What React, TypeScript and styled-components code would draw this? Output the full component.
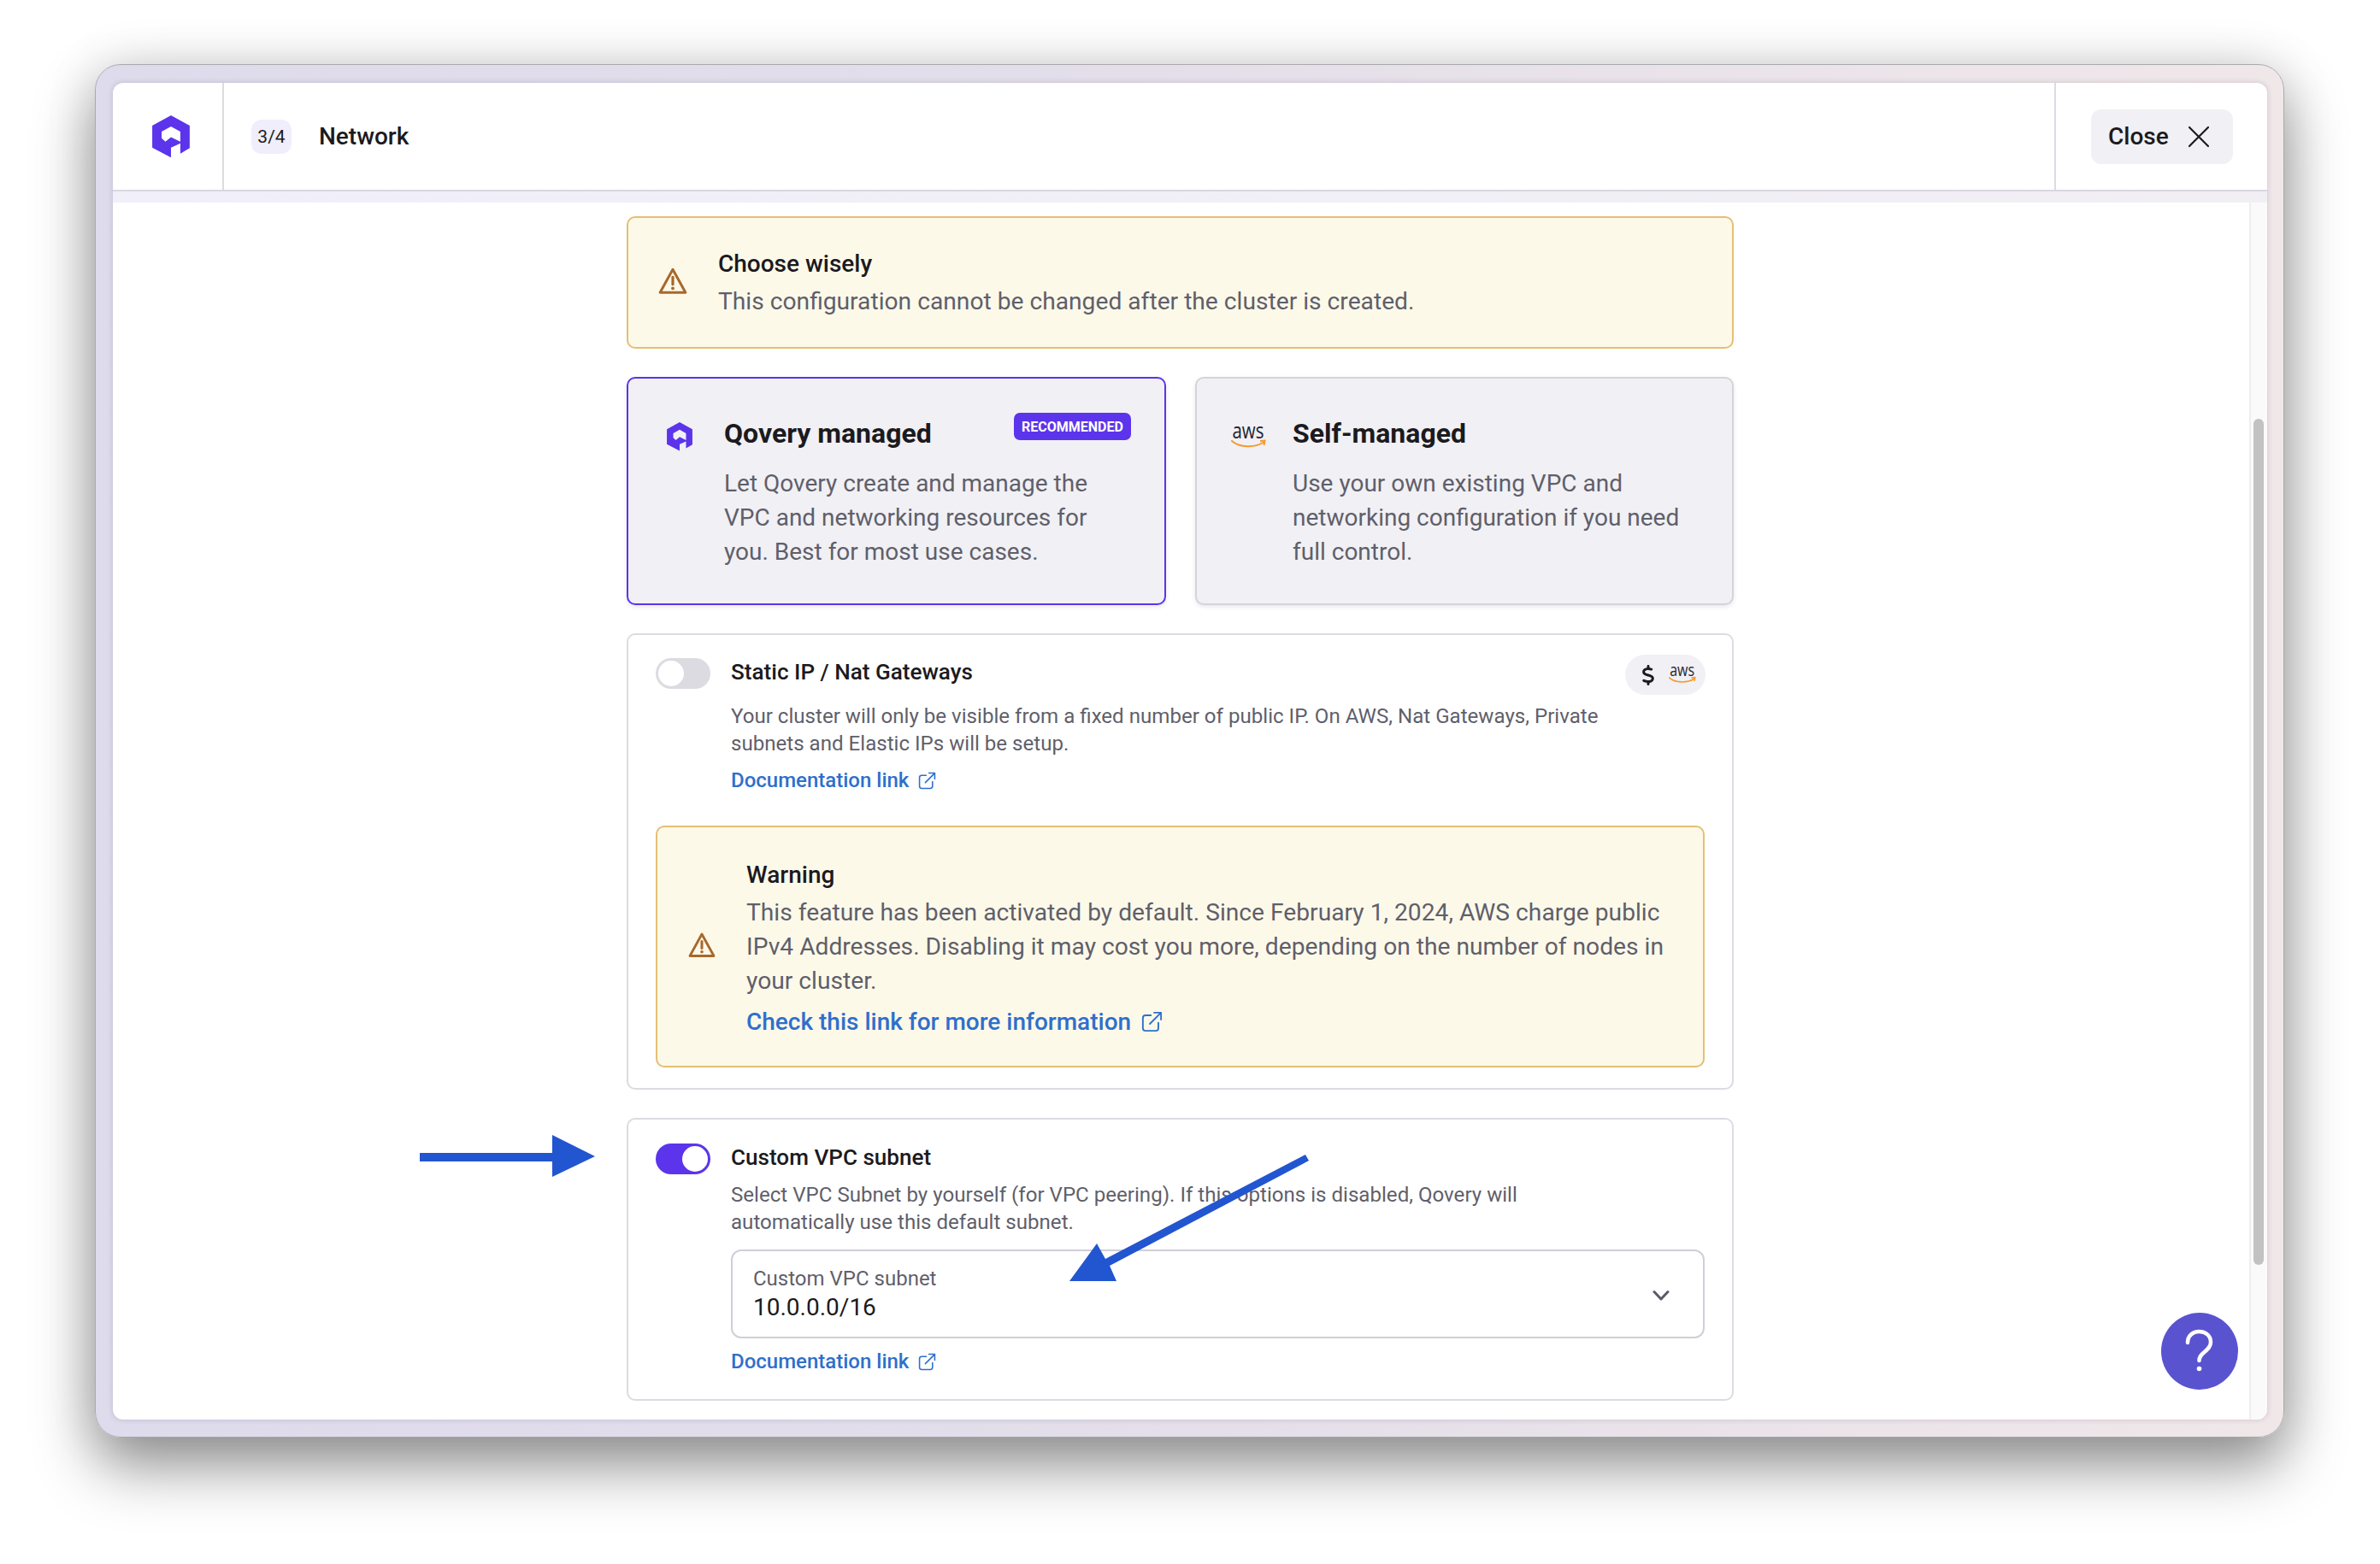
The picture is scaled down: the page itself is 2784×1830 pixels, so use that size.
import React from "react";
import styled, { createGlobalStyle } from "styled-components";
import { FaDollarSign } from "react-icons/fa6";

const GlobalStyle = createGlobalStyle`
  html, body {
    margin: 0;
    background: #fff;
    font-family: Roboto, "Liberation Sans", sans-serif;
    color: #1b1a20;
  }
  * {
    box-sizing: border-box;
  }
`;

const LogoMark = ({ size }: { size: number }) => (
  <svg width={size} height={size * 1.12} viewBox="0 0 44 49.5">
    <path
      fill="#5b34ec"
      fillRule="evenodd"
      d="M22 0 L44 12 V38.5 L33 45 V33 L22 38 V49.5 L0 38 V12 Z M22 13 L33 19 V31 L22 25.5 L15.5 31 L11 27 V19 Z"
    />
  </svg>
);

const AwsLogo = ({ width }: { width: number }) => (
  <svg width={width} height={width * 0.66} viewBox="0 0 41 27">
    <text
      x="20"
      y="15"
      textAnchor="middle"
      textLength="37"
      lengthAdjust="spacingAndGlyphs"
      fontFamily="Open Sans, sans-serif"
      fontSize="25"
      fill="#232330"
    >
      aws
    </text>
    <path d="M1 18 C10 26 28 26 38 19.5" fill="none" stroke="#f59a2c" strokeWidth="2" strokeLinecap="round" />
    <path d="M34 18 L39.5 17.5 L38.5 23" fill="none" stroke="#f59a2c" strokeWidth="2" />
  </svg>
);

const WarnIcon = ({ size }: { size: number }) => (
  <svg width={size} height={size} viewBox="0 0 32 32" fill="none">
    <path d="M16 3 L30 28.5 H2 Z" stroke="#a8682a" strokeWidth="2.8" strokeLinejoin="round" />
    <path d="M16 11.5 V19.5" stroke="#a8682a" strokeWidth="3" strokeLinecap="round" />
    <circle cx="16" cy="23.8" r="1.8" fill="#a8682a" />
  </svg>
);

const ExternalIcon = ({ size }: { size: number }) => (
  <svg width={size} height={size} viewBox="0 0 20 20" fill="none" stroke="#2f6fcc" strokeWidth="1.5" strokeLinecap="round" strokeLinejoin="round">
    <path d="M9 4 H4 A2.5 2.5 0 0 0 1.5 6.5 V16 A2.5 2.5 0 0 0 4 18.5 H13.5 A2.5 2.5 0 0 0 16 16 V11" />
    <path d="M8 12 L18.5 1.5 M12 1.5 H18.5 V8" />
  </svg>
);

const Page = styled.div`
  width: 2784px;
  height: 1830px;
  padding: 75px 112px 148px 111px;
  background: #fff;
  position: relative;
`;

const Frame = styled.div`
  height: 100%;
  padding: 21px 19px 20px 20px;
  border-radius: 30px;
  border: 1px solid #a9a9ad;
  background: linear-gradient(90deg, #dedbec 0%, #e3deea 45%, #f0e7e9 100%);
  box-shadow: 0 34px 70px rgba(0, 0, 0, 0.42), 0 0 60px rgba(0, 0, 0, 0.12);
`;

const Panel = styled.div`
  position: relative;
  height: 100%;
  display: flex;
  flex-direction: column;
  background: #fff;
  border-radius: 12px;
  overflow: hidden;
  box-shadow: 0 0 6px rgba(60, 50, 80, 0.2);
`;

const Header = styled.header`
  flex: none;
  height: 127px;
  display: flex;
  align-items: stretch;
  border-bottom: 2px solid #d9d7e2;
`;

const LogoCell = styled.div`
  width: 130px;
  padding-left: 46px;
  display: flex;
  align-items: center;
  border-right: 2px solid #dcdbe2;
`;

const TitleCell = styled.div`
  flex: 1;
  padding-left: 32px;
  display: flex;
  align-items: center;
  gap: 32px;
`;

const StepBadge = styled.span`
  width: 47px;
  height: 40px;
  border-radius: 12px;
  background: #f0eefb;
  display: flex;
  align-items: center;
  justify-content: center;
  font-size: 21px;
  color: #1b1a20;
`;

const HeaderTitle = styled.h1`
  margin: 0;
  font-size: 28px;
  font-weight: 500;
`;

const CloseCell = styled.div`
  width: 249px;
  padding-left: 41px;
  display: flex;
  align-items: center;
  border-left: 2px solid #dcdbe2;
`;

const CloseButton = styled.button`
  width: 166px;
  height: 64px;
  padding: 0 27px 0 20px;
  border: 0;
  border-radius: 12px;
  background: #f1f0f4;
  display: flex;
  align-items: center;
  justify-content: space-between;
  font-family: inherit;
  font-size: 28px;
  font-weight: 500;
  color: #1b1a20;
`;

const Stripe = styled.div`
  flex: none;
  height: 13px;
  background: linear-gradient(90deg, #f0effa, #f1eff4);
`;

const Body = styled.div`
  flex: 1;
  min-height: 0;
  display: flex;
`;

const Scroller = styled.main`
  flex: 1;
  padding: 16px 2px 0 0;
  display: flex;
  flex-direction: column;
  align-items: center;
`;

const Column = styled.div`
  width: 1295px;
  display: flex;
  flex-direction: column;
  gap: 33px;
`;

const Track = styled.div`
  flex: none;
  width: 21px;
  padding: 253px 0 0 3px;
  background: #fafafa;
  border-left: 2px solid #eeeeee;
`;

const Thumb = styled.div`
  width: 12px;
  height: 990px;
  border-radius: 6px;
  background: #c2c2c2;
`;

const Callout = styled.div<{ $inner?: boolean }>`
  height: ${(p) => (p.$inner ? "283px" : "155px")};
  padding-left: ${(p) => (p.$inner ? "36px" : "35px")};
  display: flex;
  align-items: center;
  gap: 36px;
  background: #fdf9e9;
  border: 2px solid #e4bf75;
  border-radius: 10px;
`;

const CalloutIcon = styled.span`
  display: flex;
  margin-bottom: 3px;
`;

const CalloutText = styled.div<{ $raised?: boolean }>`
  flex: 1;
  padding: 0 36px ${(p) => (p.$raised ? "3px" : "0")} 0;
`;

const CalloutTitle = styled.div`
  font-size: 28px;
  font-weight: 500;
  line-height: 48px;
  color: #1b1a20;
`;

const CalloutBody = styled.div`
  font-size: 28.2px;
  line-height: 40px;
  color: #5f5f6b;
`;

const Cards = styled.div`
  display: grid;
  grid-template-columns: 631px 630px;
  gap: 34px;
`;

const Card = styled.div<{ $active?: boolean }>`
  position: relative;
  height: 267px;
  padding: 44px 30px 0;
  display: flex;
  gap: 22px;
  background: #f1f0f4;
  border: 2px solid ${(p) => (p.$active ? "#5b34ec" : "#d5d4dc")};
  border-radius: 10px;
  box-shadow: 0 2px 5px rgba(60, 50, 80, 0.12);
`;

const CardIcon = styled.div<{ $top: number }>`
  flex: none;
  width: 60px;
  padding-top: ${(p) => p.$top}px;
  display: flex;
  justify-content: center;
`;

const CardTitle = styled.h2`
  margin: 0 0 19px;
  font-size: 32px;
  font-weight: 700;
  line-height: 40px;
  color: #1b1a20;
`;

const CardBody = styled.p`
  margin: 0;
  width: 455px;
  font-size: 28px;
  line-height: 40px;
  color: #5f5f6b;
`;

const Recommended = styled.span`
  position: absolute;
  top: 40px;
  right: 39px;
  width: 137px;
  height: 32px;
  border-radius: 7px;
  background: #5b34ec;
  color: #fff;
  font-size: 16px;
  font-weight: 700;
  display: flex;
  align-items: center;
  justify-content: center;
`;

const Box = styled.section<{ $top: number; $bottom: number }>`
  padding: ${(p) => p.$top}px 32px ${(p) => p.$bottom}px;
  background: #fff;
  border: 2px solid #dcdbe2;
  border-radius: 10px;
`;

const BoxRow = styled.div`
  display: flex;
  align-items: flex-start;
  gap: 24px;
`;

const Toggle = styled.span<{ $on?: boolean }>`
  flex: none;
  width: 64px;
  height: 36px;
  margin-top: 2px;
  padding: 3px;
  border-radius: 18px;
  display: flex;
  justify-content: ${(p) => (p.$on ? "flex-end" : "flex-start")};
  background: ${(p) => (p.$on ? "#5b34ec" : "#dcdbe2")};
`;

const Knob = styled.span`
  width: 30px;
  height: 30px;
  border-radius: 50%;
  background: #fff;
`;

const BoxText = styled.div`
  flex: 1;
  min-width: 0;
`;

const BoxTitle = styled.h3<{ $gap: number }>`
  margin: 0 0 ${(p) => p.$gap}px;
  font-size: 26.1px;
  font-weight: 500;
  line-height: 36px;
  color: #1b1a20;
`;

const BoxDesc = styled.p`
  margin: 0;
  font-size: 24.1px;
  line-height: 32px;
  color: #5f5f6b;
`;

const DocLink = styled.a`
  margin-top: 11px;
  display: flex;
  align-items: center;
  gap: 11px;
  font-size: 24px;
  font-weight: 500;
  line-height: 32px;
  color: #2f6fcc;
`;

const CalloutLink = styled(DocLink)`
  margin-top: 8px;
  gap: 12px;
  font-size: 28px;
  line-height: 40px;
`;

const CostPill = styled.div`
  flex: none;
  width: 94px;
  height: 47px;
  margin: -2px -1px 0 -1px;
  padding: 0 11px 0 15px;
  border-radius: 24px;
  background: #f1f0f4;
  display: flex;
  align-items: center;
  justify-content: space-between;
  color: #1b1a20;
  font-size: 24px;
`;

const NestedCallout = styled.div`
  margin-top: 37px;
`;

const Select = styled.div`
  margin-top: 16px;
  height: 104px;
  padding: 16px 39px 0 24px;
  display: flex;
  justify-content: space-between;
  border: 2px solid #d0cfd8;
  border-radius: 12px;
`;

const SelectLabel = styled.div`
  font-size: 24px;
  line-height: 32px;
  color: #5f5f6b;
`;

const SelectValue = styled.div`
  font-size: 28px;
  line-height: 36px;
  color: #1b1a20;
`;

const Chevron = styled.svg`
  margin-top: 29px;
  width: 20px;
  height: 14px;
`;

const HelpButton = styled.button`
  position: absolute;
  left: 2396px;
  top: 1439px;
  width: 90px;
  height: 90px;
  padding: 0;
  border: 0;
  border-radius: 50%;
  background: #5a53d0;
  display: flex;
  align-items: center;
  justify-content: center;
`;

const ArrowsLayer = styled.svg`
  position: absolute;
  left: 0;
  top: 0;
  width: 2784px;
  height: 1830px;
  pointer-events: none;
`;

const App = () => {
  return (
    <Page>
      <GlobalStyle />
      <Frame>
        <Panel>
          <Header>
            <LogoCell>
              <LogoMark size={44} />
            </LogoCell>
            <TitleCell>
              <StepBadge>3/4</StepBadge>
              <HeaderTitle>Network</HeaderTitle>
            </TitleCell>
            <CloseCell>
              <CloseButton>
                Close
                <svg width="26" height="26" viewBox="0 0 26 26" fill="none" stroke="#1b1a20" strokeWidth="2.2" strokeLinecap="round">
                  <path d="M2 2 L24 24 M24 2 L2 24" />
                </svg>
              </CloseButton>
            </CloseCell>
          </Header>
          <Stripe />
          <Body>
            <Scroller>
              <Column>
                <Callout>
                  <CalloutIcon>
                    <WarnIcon size={34} />
                  </CalloutIcon>
                  <CalloutText $raised>
                    <CalloutTitle>Choose wisely</CalloutTitle>
                    <CalloutBody>This configuration cannot be changed after the cluster is created.</CalloutBody>
                  </CalloutText>
                </Callout>

                <Cards>
                  <Card $active>
                    <CardIcon $top={7}>
                      <LogoMark size={30} />
                    </CardIcon>
                    <div>
                      <CardTitle>Qovery managed</CardTitle>
                      <CardBody>
                        Let Qovery create and manage the VPC and networking resources for you. Best for most use cases.
                      </CardBody>
                    </div>
                    <Recommended>RECOMMENDED</Recommended>
                  </Card>
                  <Card>
                    <CardIcon $top={11}>
                      <AwsLogo width={41} />
                    </CardIcon>
                    <div>
                      <CardTitle>Self-managed</CardTitle>
                      <CardBody>
                        Use your own existing VPC and networking configuration if you need full control.
                      </CardBody>
                    </div>
                  </Card>
                </Cards>

                <Box $top={25} $bottom={24}>
                  <BoxRow>
                    <Toggle>
                      <Knob />
                    </Toggle>
                    <BoxText>
                      <BoxTitle $gap={18}>Static IP / Nat Gateways</BoxTitle>
                      <BoxDesc>
                        Your cluster will only be visible from a fixed number of public IP. On AWS, Nat Gateways,
                        Private subnets and Elastic IPs will be setup.
                      </BoxDesc>
                      <DocLink>
                        Documentation link
                        <ExternalIcon size={21} />
                      </DocLink>
                    </BoxText>
                    <CostPill>
                      <FaDollarSign />
                      <AwsLogo width={32} />
                    </CostPill>
                  </BoxRow>
                  <NestedCallout>
                    <Callout $inner>
                      <CalloutIcon>
                        <WarnIcon size={32} />
                      </CalloutIcon>
                      <CalloutText>
                        <CalloutTitle>Warning</CalloutTitle>
                        <CalloutBody>
                          This feature has been activated by default. Since February 1, 2024, AWS charge public IPv4
                          Addresses. Disabling it may cost you more, depending on the number of nodes in your cluster.
                        </CalloutBody>
                        <CalloutLink>
                          Check this link for more information
                          <ExternalIcon size={25} />
                        </CalloutLink>
                      </CalloutText>
                    </Callout>
                  </NestedCallout>
                </Box>

                <Box $top={26} $bottom={28}>
                  <BoxRow>
                    <Toggle $on>
                      <Knob />
                    </Toggle>
                    <BoxText>
                      <BoxTitle $gap={10}>Custom VPC subnet</BoxTitle>
                      <BoxDesc>
                        Select VPC Subnet by yourself (for VPC peering). If this options is disabled, Qovery will
                        <br />
                        automatically use this default subnet.
                      </BoxDesc>
                      <Select>
                        <div>
                          <SelectLabel>Custom VPC subnet</SelectLabel>
                          <SelectValue>10.0.0.0/16</SelectValue>
                        </div>
                        <Chevron viewBox="0 0 20 14" fill="none" stroke="#5b5b66" strokeWidth="3" strokeLinecap="round" strokeLinejoin="round">
                          <path d="M2 2.5 L10 11 L18 2.5" />
                        </Chevron>
                      </Select>
                      <DocLink>
                        Documentation link
                        <ExternalIcon size={21} />
                      </DocLink>
                    </BoxText>
                  </BoxRow>
                </Box>
              </Column>
            </Scroller>
            <Track>
              <Thumb />
            </Track>
          </Body>
          <HelpButton>
            <svg width="36" height="52" viewBox="0 0 36 52" fill="none" stroke="#fff" strokeWidth="4.5" strokeLinecap="round">
              <path d="M4 16 C4 8 10 3 17.5 3 C25 3 31 8 31 15.5 C31 21 27 24 23 27.5 C19.5 30.5 17.5 32.5 17.5 37" />
              <circle cx="17.5" cy="46.5" r="2.8" fill="#fff" stroke="none" />
            </svg>
          </HelpButton>
        </Panel>
      </Frame>
      <ArrowsLayer viewBox="0 0 2784 1830">
        <path fill="#2255d0" d="M491 1349 H646 V1328 L696 1353 L646 1377 V1359 H491 Z" />
        <path fill="#2255d0" d="M1527 1351 L1531 1358 L1298 1481 L1306 1499 H1251 L1283 1455 L1293 1473 Z" />
      </ArrowsLayer>
    </Page>
  );
};

export default App;
